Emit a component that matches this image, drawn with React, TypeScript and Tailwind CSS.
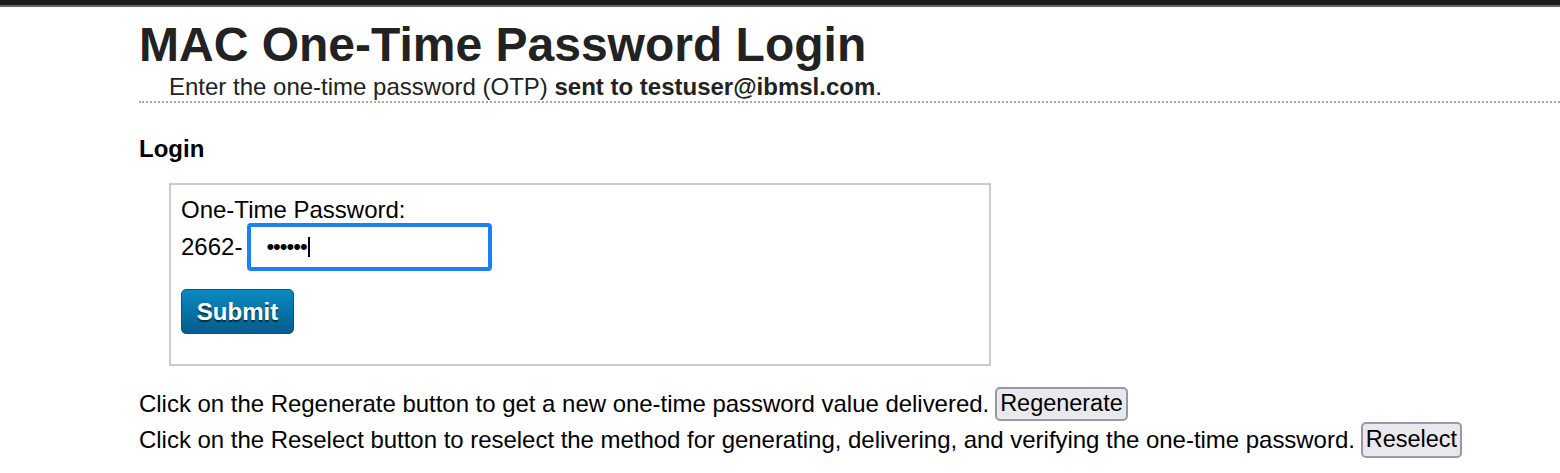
const App = () => {
  return (
    <div
      className="w-[1560px] h-[473px] bg-white text-[#222] overflow-hidden"
      style={{ fontFamily: '"Liberation Sans", Arial, sans-serif' }}
    >
      <div className="h-[5px] bg-[#1c1c1c]" />
      <div className="h-[2px] bg-[#666]" />

      <div className="pl-[139px]">
        <h1 className="mt-[13px] h-[50px] leading-[50px] text-[48px] font-bold text-[#222] whitespace-nowrap">
          MAC One-Time Password Login
        </h1>
      </div>
      <div className="ml-[139px] mt-[3px] border-b-2 border-dotted border-[#aaa]">
        <p className="pl-[30px] h-[28px] leading-[28px] text-[24px] text-[#222] whitespace-nowrap">
          Enter the one-time password (OTP) <b>sent to testuser@ibmsl.com</b>.
        </p>
      </div>

      <div className="pl-[139px] text-black">
        <h2 className="mt-[32px] h-[28px] leading-[28px] text-[24px] font-bold">Login</h2>

        <div className="mt-[20px] ml-[30px] w-[822px] h-[183px] border-2 border-[#ccc] pt-[12px] pl-[10px]">
          <p className="h-[26px] leading-[26px] text-[24px]">One-Time Password:</p>
          <div className="flex items-center gap-[5px] h-[48px]">
            <span className="text-[24px] leading-[28px]">2662-</span>
            <div className="w-[245px] h-[48px] rounded-[4px] border-[4px] border-[#1a82f7] flex items-center pl-[15px]">
              <span className="text-[22px] tracking-[-1px] leading-none">••••••</span>
              <span className="w-[2px] h-[20px] bg-black ml-[1px]" />
            </div>
          </div>
          <button className="mt-[18px] w-[113px] h-[45px] rounded-[5px] bg-gradient-to-b from-[#0a8ac4] to-[#045d8a] border border-[#04577f] text-white text-[24px] font-bold [text-shadow:0_2px_1px_rgba(0,0,0,0.55)]">
            Submit
          </button>
        </div>

        <div className="mt-[20px] text-[24px] tracking-[-0.03px]">
          <div className="flex items-center h-[36px] whitespace-nowrap">
            <span>Click on the Regenerate button to get a new one-time password value delivered.</span>
            <button className="ml-[6px] h-[34px] px-[3px] rounded-[5px] border-2 border-[#9a98a6] bg-[#e9e9ed] text-black text-[23.5px] leading-none">
              Regenerate
            </button>
          </div>
          <div className="flex items-center h-[36px] whitespace-nowrap">
            <span>
              Click on the Reselect button to reselect the method for generating, delivering, and verifying the one-time password.
            </span>
            <button className="ml-[6px] h-[36px] px-[3px] rounded-[5px] border-2 border-[#9a98a6] bg-[#e9e9ed] text-black text-[23.5px] leading-none">
              Reselect
            </button>
          </div>
        </div>
      </div>
    </div>
  );
};

export default App;
